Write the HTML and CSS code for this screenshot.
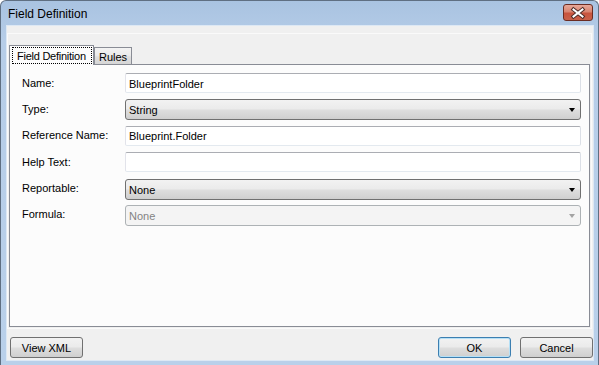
FILE: index.html
```html
<!DOCTYPE html>
<html lang="en">
  <head>
    <meta charset="UTF-8" />
    <title>Field Definition</title>
    <link rel="stylesheet" href="styles.css">
  </head>
  <body>
    <div class="window">
      <div class="titlebar">
        <span class="title">Field Definition</span>
        <div class="close">
          <svg width="30" height="17" viewBox="0 0 30 17">
            <path d="M10.5 5.5 L19.5 12.5 M19.5 5.5 L10.5 12.5" stroke="#4a2a26" stroke-width="4" stroke-linecap="square" />
            <path d="M10.5 5.5 L19.5 12.5 M19.5 5.5 L10.5 12.5" stroke="#ffffff" stroke-width="2" stroke-linecap="square" />
          </svg>
        </div>
      </div>
      <div class="client">
        <div class="panel">
          <div class="tabs">
            <div class="tab tab-active"><span class="tab-focus">Field Definition</span></div>
            <div class="tab">Rules</div>
          </div>
          <div class="tabpage">
            <div class="form">
              <label>Name:</label>
              <div class="textbox">BlueprintFolder</div>
              <label>Type:</label>
              <div class="combo">String<span class="arrow"></span></div>
              <label>Reference Name:</label>
              <div class="textbox">Blueprint.Folder</div>
              <label>Help Text:</label>
              <div class="textbox"></div>
              <label>Reportable:</label>
              <div class="combo">None<span class="arrow"></span></div>
              <label>Formula:</label>
              <div class="combo combo-disabled">None<span class="arrow"></span></div>
            </div>
          </div>
        </div>
        <div class="buttons">
          <div class="btn">View XML</div>
          <div class="spacer"></div>
          <div class="btn btn-default">OK</div>
          <div class="btn">Cancel</div>
        </div>
      </div>
    </div>
  </body>
</html>
```

FILE: styles.css
```css
html,
body {
  margin: 0;
  padding: 0;
}
body {
  font-family: "Liberation Sans", Arial, sans-serif;
  font-size: 11px;
  color: #000;
  background: #fff;
}
.window {
  width: 599px;
  height: 365px;
  box-sizing: border-box;
  border: 1px solid #5f6f82;
  border-bottom: none;
  border-radius: 6px 6px 0 0;
  background: linear-gradient(#a9c3e1, #b6cde8 40px, #b9d0ea);
  display: flex;
  flex-direction: column;
}
.titlebar {
  height: 25px;
  display: flex;
  justify-content: space-between;
  align-items: flex-start;
  padding-left: 7px;
}
.title {
  font-size: 12px;
  line-height: 12px;
  margin-top: 7px;
}
.close {
  width: 30px;
  height: 17px;
  box-sizing: border-box;
  margin: 3px 5px 0 0;
  border: 1px solid #6b2c22;
  border-radius: 3px;
  background: linear-gradient(#e7a999, #d98470 45%, #c8533d 55%, #c9614a);
  display: flex;
}
.close svg {
  margin: -1px;
}
.client {
  flex: 1;
  margin: 0 5px 5px 6px;
  background: #f0f0f0;
  box-shadow: 0 0 0 1px #dde8f4;
  display: flex;
  flex-direction: column;
  padding-top: 7px;
}
.panel {
  flex: 1;
  margin-right: 1px;
  border: 1px solid #fafafa;
  padding: 11px 1px 1px 1px;
  display: flex;
  flex-direction: column;
}
.tabs {
  height: 19px;
  display: flex;
  align-items: flex-end;
}
.tab {
  box-sizing: border-box;
  height: 17px;
  width: 38px;
  border: 1px solid #898c95;
  border-bottom: none;
  background: linear-gradient(#f3f3f3, #ebebeb 45%, #dfdfdf 55%, #d6d6d6);
  display: flex;
  align-items: center;
  justify-content: center;
  padding-top: 1px;
}
.tab-active {
  position: relative;
  z-index: 1;
  width: 85px;
  height: 20px;
  margin-bottom: -1px;
  background: #fcfcfc;
  align-items: flex-start;
  justify-content: flex-start;
  padding: 1px 1px 0 2px;
}
.tab-focus {
  box-sizing: border-box;
  height: 17px;
  flex: 1;
  border: 1px dotted #000;
  display: flex;
  align-items: center;
  padding: 1px 0 0 4px;
  letter-spacing: -0.25px;
  white-space: nowrap;
}
.tabpage {
  flex: 1;
  border: 1px solid #898c95;
  background: #fcfcfc;
  padding: 8px 8px 0 12px;
}
.form {
  display: grid;
  grid-template-columns: 103px 1fr;
  grid-auto-rows: 21px;
  row-gap: 5.4px;
}
.form label {
  display: flex;
  align-items: center;
  padding-bottom: 2px;
}
.textbox {
  box-sizing: border-box;
  height: 20px;
  border: 1px solid;
  border-color: #abadb3 #dbdfe6 #e3e9ef #e2e3ea;
  border-radius: 2px;
  background: #fff;
  padding: 1px 3px 0 3px;
  display: flex;
  align-items: center;
}
.combo {
  box-sizing: border-box;
  height: 21px;
  border: 1px solid #707070;
  border-radius: 3px;
  background: linear-gradient(#f2f2f2, #ebebeb 45%, #dddddd 55%, #cfcfcf);
  padding: 1px 5px 0 3px;
  display: flex;
  align-items: center;
  justify-content: space-between;
}
.arrow {
  width: 0;
  height: 0;
  border-top: 4px solid #000;
  border-left: 3.5px solid transparent;
  border-right: 3.5px solid transparent;
}
.combo-disabled {
  border-color: #adb2b5;
  background: #f4f4f4;
  color: #838383;
}
.combo-disabled .arrow {
  border-top-color: #a3a3a3;
}
.buttons {
  display: flex;
  padding: 8px 0 2px 3px;
  gap: 9px;
}
.spacer {
  flex: 1;
}
.btn {
  box-sizing: border-box;
  width: 73px;
  height: 21px;
  border: 1px solid #707070;
  border-radius: 3px;
  background: linear-gradient(#f2f2f2, #ebebeb 45%, #dddddd 55%, #cfcfcf);
  display: flex;
  align-items: center;
  justify-content: center;
  padding-top: 1px;
}
.btn-default {
  border-color: #3c7fb1;
  box-shadow: inset 0 0 0 1px #b6e0f6;
}
```
